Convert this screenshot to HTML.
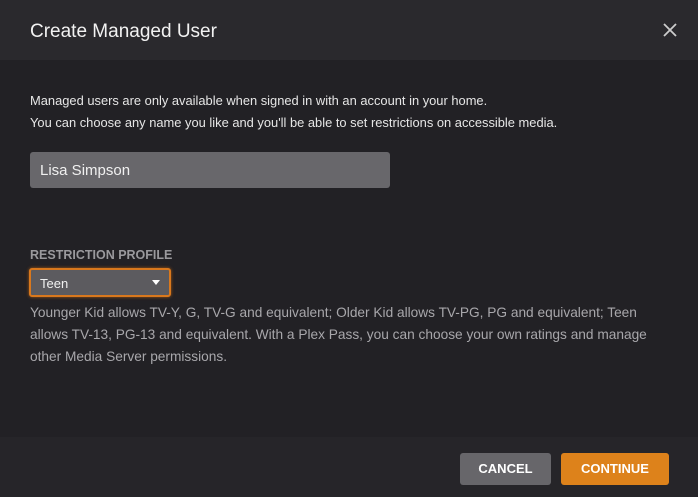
<!DOCTYPE html>
<html><head><style>
body{margin:0;width:698px;height:497px;background:#222125;font-family:"Liberation Sans",sans-serif;overflow:hidden;position:relative;color:#eee}
.hdr{position:absolute;left:0;top:0;width:698px;height:60px;background:#2a292d}
.title{position:absolute;left:30px;top:21px;font-size:19px;color:#f2f2f2}
.x{position:absolute;left:663px;top:23px}
.p{position:absolute;left:30px;font-size:12.9px;color:#e6e6e6;white-space:nowrap}
.inp{position:absolute;left:30px;top:152px;width:360px;height:36px;background:#68676b;border-radius:3px}
.inp span{position:absolute;left:10px;top:10px;font-size:15px;color:#f0f0f0}
.lab{position:absolute;left:30px;top:248px;font-size:12.5px;font-weight:bold;color:#9a999d}
.sel{position:absolute;left:29px;top:268px;width:138px;height:25px;background:#5c5b5f;border:2px solid #d9781d;border-radius:3px;box-shadow:0 0 3px #a65a15}
.sel span{position:absolute;left:9px;top:6px;font-size:13px;color:#f0f0f0}
.sel i{position:absolute;left:121px;top:10px;width:0;height:0;border-left:4px solid transparent;border-right:4px solid transparent;border-top:5px solid #fff}
.desc{position:absolute;left:30px;top:302px;width:632px;font-size:13.7px;line-height:22px;color:#a8a7ab}
.ftr{position:absolute;left:0;top:437px;width:698px;height:60px;background:#262529}
.btn{position:absolute;top:453px;height:32px;border-radius:3px;font-weight:bold;font-size:13px;text-align:center;line-height:32px;color:#fff}
</style></head><body>
<div class="hdr"><div class="title">Create Managed User</div>
<svg class="x" width="14" height="14" viewBox="0 0 14 14"><path d="M1 1L13 13M13 1L1 13" stroke="#ccc" stroke-width="1.8"/></svg></div>
<div class="p" style="top:93px">Managed users are only available when signed in with an account in your home.</div>
<div class="p" style="top:115px">You can choose any name you like and you'll be able to set restrictions on accessible media.</div>
<div class="inp"><span>Lisa Simpson</span></div>
<div class="lab">RESTRICTION PROFILE</div>
<div class="sel"><span>Teen</span><i></i></div>
<div class="desc">Younger Kid allows TV-Y, G, TV-G and equivalent; Older Kid allows TV-PG, PG and equivalent; Teen allows TV-13, PG-13 and equivalent. With a Plex Pass, you can choose your own ratings and manage other Media Server permissions.</div>
<div class="ftr"></div>
<div class="btn" style="left:460px;width:91px;background:#67666a">CANCEL</div>
<div class="btn" style="left:561px;width:108px;background:#dd821b">CONTINUE</div>
</body></html>
